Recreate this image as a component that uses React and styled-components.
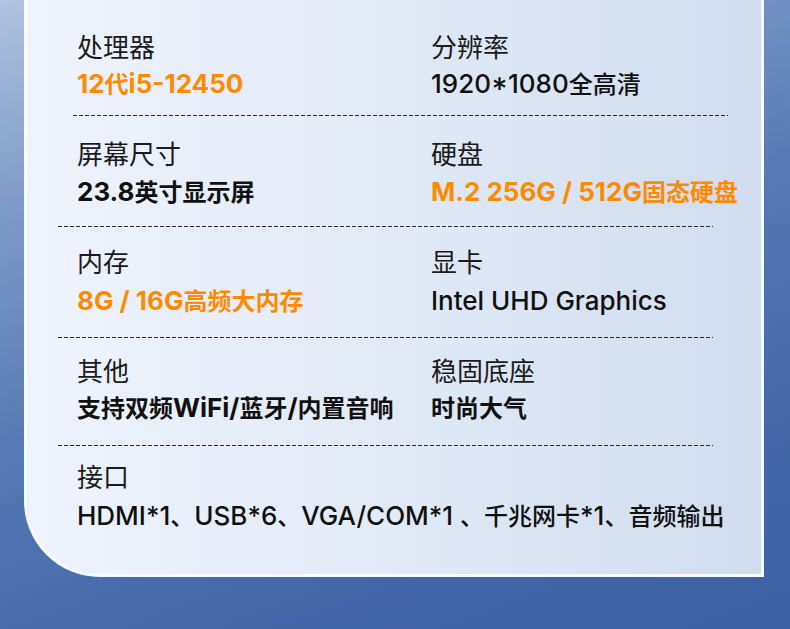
import React from "react";
import styled, { createGlobalStyle } from "styled-components";

const GlobalStyle = createGlobalStyle`
  html, body {
    margin: 0;
    padding: 0;
  }
  body {
    font-family: "Noto Sans CJK SC", "Noto Sans", sans-serif;
  }
`;

const Page = styled.div`
  width: 790px;
  height: 629px;
  box-sizing: border-box;
  padding: 0 26px 0 24px;
  background: linear-gradient(160deg, #b0c3df 0%, #7f9bc9 22%, #5579b4 50%, #4367a7 78%, #3d62a3 100%);
  overflow: hidden;
`;

const Card = styled.div`
  height: 577px;
  box-sizing: border-box;
  border: 3px solid #f7faff;
  border-top: none;
  border-bottom-left-radius: 76px;
  background: linear-gradient(90deg, #eef3fc 0%, #e3ebf7 45%, #d0dcee 100%);
  padding: 29px 0 0 50px;
`;

const Row = styled.div`
  display: grid;
  grid-template-columns: 354px 1fr;
  padding-top: ${(p) => p.$top}px;
  padding-bottom: ${(p) => p.$bottom ?? 16}px;
  row-gap: ${(p) => p.$gap}px;
`;

const Label = styled.div`
  font-size: 26px;
  line-height: 34px;
  font-weight: 400;
  color: #1b1b1b;
  white-space: nowrap;
`;

const Value = styled.div`
  font-family: "Noto Sans CJK SC", sans-serif;
  font-size: 24px;
  line-height: 34px;
  height: 34px;
  font-weight: ${(p) => p.$weight ?? 700};
  color: ${(p) => (p.$accent ? "#ff8a00" : "#111")};
  white-space: nowrap;
  grid-row: 2;
  grid-column: ${(p) => p.$col};
`;

// latin runs are set a little larger than the CJK ones, as in the source art
const Latin = styled.span`
  font-family: "Inter", sans-serif;
  font-size: 26px;
  line-height: 0;
`;

const Dash = styled.div`
  height: 1px;
  margin-left: ${(p) => p.$shift}px;
  width: 655px;
  background: repeating-linear-gradient(90deg, #2a2a2a 0 4px, transparent 4px 6px);
`;

const CJK = /([\u3000-\u9fff\uff00-\uffef]+)/;

const runs = (text) =>
  text
    .split(CJK)
    .filter(Boolean)
    .map((part, i) => (CJK.test(part) ? part : <Latin key={i}>{part}</Latin>));

const specs = [
  {
    top: 0, gap: 3, bottom: 15, shift: -4,
    items: [
      { label: "处理器", value: "12代i5-12450", accent: true },
      { label: "分辨率", value: "1920*1080全高清", weight: 500 },
    ],
  },
  {
    top: 20, gap: 4, bottom: 18, shift: -19,
    items: [
      { label: "屏幕尺寸", value: "23.8英寸显示屏" },
      { label: "硬盘", value: "M.2 256G / 512G固态硬盘", accent: true },
    ],
  },
  {
    top: 17, gap: 5, bottom: 20, shift: -19,
    items: [
      { label: "内存", value: "8G / 16G高频大内存", accent: true },
      { label: "显卡", value: "Intel UHD Graphics", weight: 500 },
    ],
  },
  {
    top: 15, gap: 3, bottom: 21, shift: -19,
    items: [
      { label: "其他", value: "支持双频WiFi/蓝牙/内置音响" },
      { label: "稳固底座", value: "时尚大气" },
    ],
  },
];

export default function App() {
  return (
    <>
      <GlobalStyle />
      <Page>
        <Card>
          {specs.map((row, i) => (
            <React.Fragment key={i}>
              <Row $top={row.top} $gap={row.gap} $bottom={row.bottom}>
                {row.items.map((s, j) => (
                  <React.Fragment key={s.label}>
                    <Label style={{ gridColumn: j + 1 }}>{s.label}</Label>
                    <Value $col={j + 1} $accent={s.accent} $weight={s.weight}>
                      {runs(s.value)}
                    </Value>
                  </React.Fragment>
                ))}
              </Row>
              <Dash $shift={row.shift} />
            </React.Fragment>
          ))}
          <Row $top={13} $gap={5}>
            <Label>接口</Label>
            <Value $col="1 / span 2" $weight={500}>
              {runs("HDMI*1、USB*6、VGA/COM*1 、千兆网卡*1、音频输出")}
            </Value>
          </Row>
        </Card>
      </Page>
    </>
  );
}
